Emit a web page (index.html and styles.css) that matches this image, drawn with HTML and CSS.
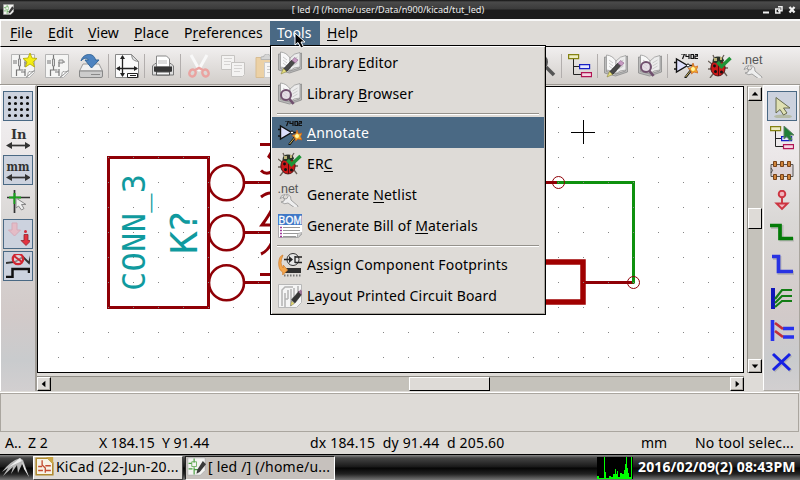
FILE: index.html
```html
<!DOCTYPE html>
<html lang="en">
<head>
<meta charset="utf-8">
<title>[ led /] (/home/user/Data/n900/kicad/tut_led)</title>
<link rel="stylesheet" href="styles.css">
</head>
<body>
<svg class="defs" width="0" height="0">
  <symbol id="sheet" viewBox="0 0 24 24">
    <path d="M.5.5h23v18l-5 5H.5z" fill="#f5f5f4" stroke="#b5b5b5"/>
    <path d="M2 7h4M2 9h4M8.500 1v4M8.500 12v4h-3v6M8.500 16h4M14 8v5M14 15v7M10 18h4M17 8h3" fill="none" stroke="#777" stroke-width="1.200"/>
    <path d="M7.500 5h2v7h-2zM14 6h4v3h-4z" fill="#ddd" stroke="#888"/>
    <path d="M15 23.500c3-2 1-4 3-6 2 1 4 0 5.500-1z" fill="#fff" stroke="#999"/>
  </symbol>
  <symbol id="save" viewBox="0 0 24 24">
    <path d="m4 10h16l3.500 7H.5z" fill="#f1f1f1" stroke="#999"/><path d="M.5 17h23v5q0 1.500-1.500 1.500H2Q.5 23.500.5 22z" fill="#ccc" stroke="#888"/><path d="M12 20.500h9" stroke="#888"/>
    <path d="M2 7C4-1 15-2 16.500 6H20l-7.500 8L6 6h3.500C8 3.500 5 3.500 2 7z" fill="#4d83c0" stroke="#336699"/>
  </symbol>
  <symbol id="page" viewBox="0 0 24 24">
    <path d="M.5.500h16l7 7v16H.5z" fill="#fbfbfb" stroke="#888"/><path d="M16.500.5c1 4 0 6 7 7z" fill="#ddd" stroke="#888"/>
    <path d="M7.500 2v20M2 14.500h20" stroke="#222" stroke-width="1.300"/><path d="m7.500 1 2.500 4h-5zM7.500 23l2.500-4h-5zM1 14.500l4-2.500v5zM23 14.500l-4-2.500v5z" fill="#222"/><path d="M12.500 19.500h10v4h-10zM15 21.500h6" fill="#fff" stroke="#222"/>
  </symbol>
  <symbol id="print" viewBox="0 0 24 24">
    <path d="M1.500 12 4 9.500h16l2.500 2.500v9h-21z" fill="#ddd" stroke="#777"/><path d="M5.500 2h10l3 3v8h-13z" fill="#fff" stroke="#888"/><path d="M7 7h9M7 9h9" stroke="#bbb"/><path d="M3 12.500h18v5q-9 2.500-18 0z" fill="#353535"/><path d="M5.500 18h13v3h-13z" fill="#f5f5f5" stroke="#555"/>
  </symbol>
  <symbol id="cut" viewBox="0 0 24 24"><path d="m4 1 9 16M20 1l-9 16" stroke="#f8f8f8" stroke-width="3"/><g fill="none" stroke="#eaa3a0" stroke-width="2.500"><ellipse cx="5.500" cy="19" rx="3" ry="3.500" transform="rotate(30 5.500 19)"/><ellipse cx="18.500" cy="19" rx="3" ry="3.500" transform="rotate(-30 18.500 19)"/><path d="M8 16l4-2 4 2"/></g></symbol>
  <symbol id="copy" viewBox="0 0 24 24"><g fill="#f4f3f2" stroke="#c6c4c2"><path d="M.5 1.500h13v14H.5z"/><path d="M10.500 8.500h13v12l-2 2h-11z"/></g><path d="M3 4.500h8M3 7.500h7M3 10.500h6M13 11.500h8M13 14.500h8M13 17.500h6" stroke="#d5d3d2"/></symbol>
  <symbol id="paste" viewBox="0 0 24 24"><path d="M1 3.500h21v20H1z" fill="#ecd1a5" stroke="#d8bd92"/><path d="M6 5.500V3l3-.5C9-1 15-1 15 2.500l3 .5v2.500z" fill="#d5d5d5" stroke="#b5b5b5"/><path d="M9.500 8.500h14v15h-14zM12 12.500h9M12 15.500h9M12 18.500h6" fill="#f7f6f5" stroke="#ccc"/></symbol>
  <symbol id="find" viewBox="0 0 24 24"><circle cx="8" cy="8" r="7" fill="#eee" stroke="#555" stroke-width="2"/><path d="m14 13 8 8" stroke="#555" stroke-width="3.500"/></symbol>
  <symbol id="tree" viewBox="0 0 24 24"><path d="M5.500 4v16.500H13M5.500 12.500H12" fill="none" stroke="#222"/><g stroke-width="1.200"><path d="M.6.600h10v4H.6z" fill="#ececc2" stroke="#848212"/><path d="M11.600 10.600h10v4h-10z" fill="#e4e7ff" stroke="#1720c4"/><path d="M13.500 18.600h10v4h-10z" fill="#f5d4e2" stroke="#b11654"/></g></symbol>
  <symbol id="book" viewBox="0 0 24 24"><path d="M.5 3v16l11 3 12-4V2l-2 1v14l-9.500 3L2.500 17.500V3z" fill="#bbb" stroke="#8c8c8c" stroke-width=".8"/><path d="M2.500 1q6 .5 9.500 6v13q-4-4-9.500-4z" fill="#f8f8f8" stroke="#9a9a9a" stroke-width=".8"/><path d="M12 7q4-5 10-5.500V16q-7 0-10 4z" fill="#ececec" stroke="#9a9a9a" stroke-width=".8"/><path d="m5 6 4 3M5 9l4 3M5 12l4 3M14.500 9l5-3M14.500 12l5-3M14.500 15l5-3" stroke="#cbcbcb"/></symbol>
  <symbol id="edlib" viewBox="0 0 24 24"><use href="#book"/><path d="m14 9 3 2.500-8.500 9-3-2.500z" fill="#4a4a4a" stroke="#222" stroke-width=".7"/><path d="m5.500 17.500 3 3-5.500 2.500z" fill="#e6df7e" stroke="#8c8640" stroke-width=".6"/><path d="m14 9.500 2.500-3 3.500 2.500-2.500 3z" fill="#c79bc2" stroke="#8d668b" stroke-width=".6"/></symbol>
  <symbol id="brlib" viewBox="0 0 24 24"><use href="#book"/><circle cx="8" cy="13" r="5" fill="#ddd3de" fill-opacity=".7" stroke="#70506e" stroke-width="2"/><path d="m11.500 17 4 5" stroke="#70506e" stroke-width="2.700"/></symbol>
  <symbol id="annot" viewBox="0 0 24 24"><path d="M7 0h3.500L8.500 5M12 0v2.500h3M15 0v5M17 .5h2.500v4H17zM21 .5h2.500v1.700H21v2.300h3" fill="none" stroke="#111" stroke-width="1.200"/><path d="M2.500 5v13L13.500 11.500z" fill="#dcdefb" stroke="#111" stroke-width="1.400"/><path d="M0 8.500h2M0 15h2M16 11.500h4" stroke="#111" stroke-width="1.300"/><circle cx="14" cy="11.500" r="1.500" fill="#fff" stroke="#111"/><path d="m18 15-7 9" stroke="#111" stroke-width="2.200"/><path d="m18 15-6.500 8" stroke="#e0c86a" stroke-width=".9"/><path d="m19 9 1.500 4 3.500-1-1.500 3.500L24 19l-4-1-2.500 2-.5-3.500-3-2 3.500-1z" fill="#f3a92b" stroke="#c95d20" stroke-width=".7"/><circle cx="19" cy="15" r="2" fill="#fff7a0"/></symbol>
  <symbol id="bug" viewBox="0 0 24 24"><path d="M7 6 5 1M13 6l3-5M4 10 0 7M3 15H0M5 20l-3 4M16 18l3 4M17 14h3" fill="none" stroke="#6a6058" stroke-width="1.300"/><ellipse cx="10" cy="14" rx="7.200" ry="8" fill="#cc1818" stroke="#3a0b0b" stroke-width=".8"/><path d="M4.500 8q0-5.500 5.500-5.500T16 7l-3 2H7z" fill="#2b3328"/><path d="M6 4h3v3H6zM12 3h2v3h-2z" fill="#bcb279"/><path d="M10.500 9v13" stroke="#550d0d"/><g fill="#111"><circle cx="6.500" cy="12" r="1.400"/><circle cx="7.500" cy="17.500" r="1.500"/><circle cx="13.500" cy="18" r="1.500"/></g><path d="m9.500 8 4 4.500L22.500 4" fill="none" stroke="#1f9437" stroke-width="3.500"/></symbol>
  <symbol id="net" viewBox="0 0 24 24"><text x="-.5" y="9.500" font-family="Liberation Sans" font-size="12.500" textLength="21" fill="#555">.net</text><path d="M7 11.500q-4 0-5 4l2.500-1 2 1.500-.5 2-3 1q4 3 7 1l7 5q3 1 3-2l-7-6q1-4-4-6l-1 .5 2 2-1 2-2 .5-2-2z" fill="#eee" stroke="#929292" stroke-width=".8"/></symbol>
  <symbol id="bom" viewBox="0 0 24 24"><path d="M.5.500h24v19l-4 4H.5z" fill="#fff" stroke="#aaa"/><path d="M0 0h25v11H0z" fill="#3f78c6"/><text x=".5" y="9.600" font-family="Liberation Sans" font-size="10.500" textLength="23.500" lengthAdjust="spacingAndGlyphs" fill="#fff" stroke="#fff" stroke-width=".3">BOM</text><path d="M5 13.500h17M5 16.500h17M5 19.500h15M5 22.500h13" stroke="#999"/><path d="M2 13.500h2M2 16.500h2M2 19.500h2M2 22.500h2" stroke="#a0389b" stroke-width="1.400"/><path d="m19 23.500 1-4 4.500-1z" fill="#eee" stroke="#aaa"/></symbol>
  <symbol id="cvpcb" viewBox="0 0 24 24"><circle cx="15" cy="6.500" r="6" fill="#e6e6e6" stroke="#333"/><path d="M6 6.500h5M17 3v7M17 4h7M17 9.500h7" stroke="#222" stroke-width="1.300"/><path d="m11 3 4 3.500L11 10z" fill="#222"/><path d="M5 15h18v5H5z" fill="#303030"/><path d="M6 22.500h18" stroke="#777" stroke-width="2" stroke-dasharray="1.500 1.500"/><path d="M5 2Q1 3 .7 10q-.2 7 4 9v3l5-5-4.500-5v3Q1 11 5 2z" fill="#f4a64c" stroke="#cf7b2b" stroke-width=".7"/></symbol>
  <symbol id="pcb" viewBox="0 0 24 24"><path d="M.5.500h23v18l-5 5H.5z" fill="#f5f5f5" stroke="#b8b8b8"/><path d="M4 22V6l3-3h8M7 23V9M10 15V6M10 15H7M13 5v17M16 4v9l-3 3M20 2v6" fill="none" stroke="#b3b3b3" stroke-width="1.500"/><path d="m21 7 3 3-7 9-3.500-3z" fill="#363636" stroke="#222" stroke-width=".5"/><path d="m20.500 8 2-2.500 3 3-2 2.500z" fill="#9a7395"/><path d="m13.500 17 3 2.500-4 2.500z" fill="#e8dc6e" stroke="#555" stroke-width=".4"/></symbol>
  <symbol id="grid" viewBox="0 0 24 24"><path d="M3.500 3.500h20M3.500 9.500h20M3.500 15.500h20M3.500 21.500h20" stroke="#111" stroke-width="3.200" stroke-linecap="round" stroke-dasharray="0 6"/></symbol>
  <symbol id="arrows" viewBox="0 0 24 24"><path d="M4 19.500h17" stroke="#333" stroke-width="1.700"/><path d="m0 19.500 6-3.500v7zM25 19.500l-6-3.500v7z" fill="#333"/></symbol>
  <symbol id="in" viewBox="0 0 24 24"><text x="5" y="13" class="unit">In</text><use href="#arrows"/></symbol>
  <symbol id="mm" viewBox="0 0 24 24"><text x=".5" y="13" class="unit" textLength="23" lengthAdjust="spacingAndGlyphs">mm</text><use href="#arrows"/></symbol>
  <symbol id="cross" viewBox="0 0 24 24"><path d="M8.500 0v23M1 7.500h23" stroke="#333" stroke-width="1.700"/><path d="M8.500 3v11M3 7.500h12" stroke="#19a21c" stroke-width="2"/><path d="M10 8v10l2.500-2 3 4 2.500-1.500-2.500-4H20z" fill="#eee" stroke="#888"/></symbol>
  <symbol id="hid" viewBox="0 0 24 24"><path d="M6 1h5v7h3.500l-6 6-6-6H6z" fill="#e4bcc6" stroke="#d5aab8"/><path d="M18 12.500h4v6h3l-5 5-5-5h3z" fill="#e2323f" stroke="#8e2731" stroke-width=".8"/><circle cx="19.500" cy="9.500" r="1.500" fill="#d42c3a"/></symbol>
  <symbol id="nodir" viewBox="0 0 24 24"><path d="m0 9 9-1 8-5 6 6 2-8" fill="none" stroke="#333" stroke-width="1.800"/><circle cx="12" cy="5" r="5.200" fill="#f1d5d5" fill-opacity=".5" stroke="#d12732" stroke-width="2.300"/><path d="m8 2 8 6" stroke="#d12732" stroke-width="2"/><path d="M0 23h6.500v-8H23v4" fill="none" stroke="#111" stroke-width="2.500"/></symbol>
  <symbol id="arrow" viewBox="0 0 24 24"><ellipse cx="13" cy="22.500" rx="9" ry="2" fill="#a5ac80" opacity=".6"/><path d="M6 3.500v15.500l4-3.500 3.500 5.500 3.500-2-3.500-5H20z" fill="#dfe0b2" stroke="#666a4e"/></symbol>
  <symbol id="treego" viewBox="0 0 24 24"><use href="#tree"/><path d="M14 0v13l3-2.500 2.500 4 2.500-1-2-4.500h4z" fill="#207f37" stroke="#5e8065"/></symbol>
  <symbol id="chip" viewBox="0 0 24 24"><path d="M1 6.500h22v12H1z" fill="#ded4d7" stroke="#555"/><path d="M1 10q3 2 0 5" fill="none" stroke="#444"/><g fill="#cf853c" stroke="#794319"><path d="M3.500 3.500h3v5h-3zM10.500 3.500h3v5h-3zM17.500 3.500h3v5h-3zM3.500 16.500h3v5h-3zM10.500 16.500h3v5h-3zM17.500 16.500h3v5h-3z"/></g></symbol>
  <symbol id="power" viewBox="0 0 24 24"><g fill="#f1b4bc" stroke="#cc3541" stroke-width="1.900"><path d="M12 7v7"/><circle cx="12" cy="4" r="3.300"/><path d="M6.500 13.500h11L12 19z"/></g></symbol>
  <symbol id="wire" viewBox="0 0 24 24"><path d="M1 5h10.500v12.500H24" fill="none" stroke="#999" stroke-width="4" opacity=".5"/><path d="M0 3.500h10v13h13" fill="none" stroke="#047b08" stroke-width="3.700"/></symbol>
  <symbol id="bus" viewBox="0 0 24 24"><path d="M3 4h6.500v15H24" fill="none" stroke="#999" stroke-width="4" opacity=".5"/><path d="M2 2.500h6.500v15H23" fill="none" stroke="#2933e2" stroke-width="3.700"/></symbol>
  <symbol id="entry" viewBox="0 0 24 24"><path d="M3 2v21" stroke="#1016b8" stroke-width="4"/><path d="M5 13l7-9h10M5 17l7-7h10M5 21l7-6h10" fill="none" stroke="#137d15" stroke-width="2.200"/></symbol>
  <symbol id="busent" viewBox="0 0 24 24"><path d="M2.500 2v21M13 10.500h11M13 19h11" stroke="#2731ed" stroke-width="3.600"/><path d="m5 5 8 6M5 13l8 6" stroke="#c12e3a" stroke-width="2.700"/></symbol>
  <symbol id="noconn" viewBox="0 0 24 24"><path d="m4 5 17 16M4 21 21 5" stroke="#999" stroke-width="3.200" opacity=".5"/><path d="m3 4 17 16M3 20 20 4" stroke="#1520e5" stroke-width="3"/></symbol>
  <symbol id="proj" viewBox="0 0 24 24"><path d="M1.500 1.500h15l6 6v15h-21z" fill="#f7f3e6" stroke="#b08b31" stroke-width="2"/><path d="M14 0h9v9z" fill="#c9a545"/><path d="M9 4v6l4 4v6M4 12h5M13 11h7M13 17h7M4 17h6" fill="none" stroke="#c44d32" stroke-width="1.700"/></symbol>
  <symbol id="eesch" viewBox="0 0 24 24"><path d="M1 1h22v16l-6 6H1z" fill="#f3f3f1" stroke="#aaa"/><path d="M2 8h4M9 2v5M9 13v9M9 16h6M2 15h5" stroke="#4ba042" stroke-width="1.500"/><path d="M6 6h6v6H6z" fill="none" stroke="#5aa64c"/><path d="m20 5 4 4-8 10-4 2 1-5z" fill="#3a3a3a"/></symbol>
</svg>

<div class="screen">
  <header class="title">
    <svg class="title-icon"><use href="#eesch"/></svg>
    <span>[ led /] (/home/user/Data/n900/kicad/tut_led)</span>
    <svg class="winbtns" viewBox="0 0 36 10"><path d="M1 7.500h6" stroke="#eee" stroke-width="2"/><path d="M16 1.800h4v4h-4M13.800 4h4v4h-4z" fill="none" stroke="#eee" stroke-width="1.500"/><path d="m27.500 2 5 5.500M27.500 7.500l5-5.500" stroke="#eee" stroke-width="2.300"/></svg>
  </header>

  <nav class="menubar">
    <span class="m-file"><u>F</u>ile</span><span class="m-edit"><u>E</u>dit</span><span class="m-view"><u>V</u>iew</span><span class="m-place"><u>P</u>lace</span><span class="m-pref">P<u>r</u>eferences</span>
    <div class="m-tools open"><u>T</u>ools
      <div class="menu">
        <div class="item"><svg><use href="#edlib"/></svg><span>Library <u>E</u>ditor</span></div>
        <div class="item"><svg><use href="#brlib"/></svg><span>Library <u>B</u>rowser</span></div>
        <hr>
        <div class="item active"><svg><use href="#annot"/></svg><span><u>A</u>nnotate</span></div>
        <div class="item"><svg><use href="#bug"/></svg><span>ER<u>C</u></span></div>
        <div class="item"><svg><use href="#net"/></svg><span>Generate <u>N</u>etlist</span></div>
        <div class="item"><svg><use href="#bom"/></svg><span>Generate Bill of <u>M</u>aterials</span></div>
        <hr>
        <div class="item"><svg><use href="#cvpcb"/></svg><span>A<u>s</u>sign Component Footprints</span></div>
        <div class="item"><svg><use href="#pcb"/></svg><span><u>L</u>ayout Printed Circuit Board</span></div>
      </div>
    </div>
    <span class="m-help"><u>H</u>elp</span>
  </nav>

  <div class="toolbar">
    <svg><use href="#sheet"/><polygon points="19,-1 21,4 26,4.500 22,8 23.500,13 19,10 14.500,13 16,8 12,4.500 17,4" fill="#f4ee12" stroke="#b3a800" stroke-width=".8"/></svg><svg><use href="#sheet"/></svg><svg><use href="#save"/></svg><i></i>
    <svg><use href="#page"/></svg><i></i><svg><use href="#print"/></svg><i></i>
    <svg><use href="#cut"/></svg><svg><use href="#copy"/></svg><svg><use href="#paste"/></svg>
    <b></b>
    <svg><use href="#find"/></svg><i></i><svg><use href="#tree"/></svg><i></i>
    <svg><use href="#edlib"/></svg><svg><use href="#brlib"/></svg><i></i>
    <svg><use href="#annot"/></svg><svg><use href="#bug"/></svg><svg><use href="#net"/></svg>
  </div>

  <main class="work">
    <div class="side left">
      <div class="tool on"><svg><use href="#grid"/></svg></div>
      <div class="tool"><svg><use href="#in"/></svg></div>
      <div class="tool on"><svg><use href="#mm"/></svg></div>
      <div class="tool"><svg><use href="#cross"/></svg></div>
      <div class="tool on"><svg><use href="#hid"/></svg></div>
      <div class="tool on"><svg><use href="#nodir"/></svg></div>
    </div>
    <div class="view">
      <svg class="sheet" viewBox="38 87 705 285">
        <defs><pattern id="dots" x="58" y="107" width="25" height="25" patternUnits="userSpaceOnUse"><rect width="1" height="1" fill="#858585"/></pattern></defs>
        <g fill="none" stroke="#8f0006" stroke-width="3">
          <path d="M108.500 157.500h100v150h-100z"/>
          <g stroke-width="2.600"><circle cx="226.500" cy="182.700" r="17.500"/><circle cx="226.500" cy="232.700" r="17.500"/><circle cx="226.500" cy="282.700" r="17.500"/></g>
          <path d="M244 182.500h50M244 232.500h50M244 282.500h50"/>
          <path d="M260 144.500h16l-7 12q10 8 3 15-6 4-11-1M261 197q8-6 13-3 5 8-12 31h14M261 254q7-3 11-12M260 274.500h16"/>
          <path d="M540 182.500h18M585 282.500h49"/>
          <path d="M500 262h83v40h-83" stroke-width="5.500" stroke="#a00000"/>
        </g>
        <path d="M557 182.500h76.500v101" fill="none" stroke="#0e910e" stroke-width="3"/>
        <g fill="none" stroke="#8f0006"><circle cx="558.500" cy="182.500" r="6"/><circle cx="633.500" cy="282.500" r="6"/></g>
        <g class="ref"><text transform="translate(145 291) rotate(-90)" font-size="32" textLength="117">CONN_3</text><text transform="translate(197 254) rotate(-90)" font-size="38" textLength="44">K?</text></g>
        <rect x="38" y="87" width="705" height="285" fill="url(#dots)"/>
        <path d="M571 132.500h24M583.500 120v24" stroke="#000"/>
      </svg>
      <div class="vbar"><button class="sb"><svg viewBox="0 0 13 13"><path d="m6.500 4 3.500 4H3z"/></svg></button><div class="vthumb"></div><button class="sb"><svg viewBox="0 0 13 13"><path d="m6.500 9 3.500-4H3z"/></svg></button></div>
      <div class="hbar"><button class="sb"><svg viewBox="0 0 13 13"><path d="m4 6.500 4-3.500v7z"/></svg></button><div class="hthumb"></div><button class="sb"><svg viewBox="0 0 13 13"><path d="m9 6.500-4-3.500v7z"/></svg></button></div>
    </div>
    <div class="side right">
      <div class="tool on"><svg><use href="#arrow"/></svg></div>
      <div class="tool"><svg><use href="#treego"/></svg></div>
      <div class="tool"><svg><use href="#chip"/></svg></div>
      <div class="tool"><svg><use href="#power"/></svg></div>
      <div class="tool"><svg><use href="#wire"/></svg></div>
      <div class="tool"><svg><use href="#bus"/></svg></div>
      <div class="tool"><svg><use href="#entry"/></svg></div>
      <div class="tool"><svg><use href="#busent"/></svg></div>
      <div class="tool"><svg><use href="#noconn"/></svg></div>
    </div>
  </main>

  <div class="messages"></div>
  <div class="status"><span>A..</span><span>Z 2</span><span>X 184.15&nbsp; Y 91.44</span><span class="delta">dx 184.15&nbsp; dy 91.44&nbsp; d 205.60</span><span>mm</span><span class="hint">No tool selec...</span></div>

  <footer class="taskbar">
    <svg class="logo" viewBox="0 0 33 25"><path d="M2 17Q10 6 20 3l3 2 6 17-7-13-4 9-1-8-6 9 2-7-10 9 5-8z" fill="#b8b8b8"/><path d="m20 3 2 3-13 6zM22 6l7 16-5-8z" fill="#eee"/></svg>
    <div class="task"><svg><use href="#proj"/></svg><span>KiCad (22-Jun-20...</span></div>
    <div class="task down"><svg><use href="#eesch"/></svg><span>[ led /] (/home/u...</span></div>
    <svg class="cpu" viewBox="0 0 36 22"><path d="M0 0h36v22H0z"/><path d="M0 22v-3h2v2h5V0h1v15h1v6h3v-2h2v1h2v-3h2v-5h1v5h1v-3h1v6h2v-4h2v1h2v-4h1v-6h1V0h1v11h1v5h1v4h2V0h1v22z" fill="#0f0"/></svg>
    <time>2016/02/09(2) 08:43PM</time>
  </footer>
</div>
<svg class="pointer" viewBox="0 0 12 18"><path d="M1 1v12l3-2.500L7 16l2.500-1-2.500-5h4z" stroke="#fff" stroke-width="1"/></svg>
</body>
</html>
```
FILE: styles.css
```css
* { box-sizing: border-box; }
body { margin: 0; font: 14px/18px "Noto Sans", "Open Sans", sans-serif; color: #000; }
svg { overflow: visible; display: block; flex: none; }
.defs { display: none; }
.screen { width: 800px; height: 480px; display: flex; flex-direction: column; background: #dedbd7; overflow: hidden; }
u { text-underline-offset: 2px; text-decoration-thickness: 1px; text-decoration-skip-ink: none; }

.title { height: 19px; display: flex; align-items: center; justify-content: space-between; padding: 0 2px 0 3px; color: #eee; font-size: 9.15px; line-height: 18px; background: linear-gradient(#111 0, #4a4a4a 2px, #3b3b3b 9px, #1c1c1c 10px, #1c1c1c); white-space: nowrap; }
.title-icon { width: 11px; height: 11px; margin-right: 0; }
.title span { margin-right: 0; }
.title-icon use { width: 11px; height: 11px; }
.winbtns { width: 36px; height: 10px; }

.menubar { height: 28px; display: flex; padding-left: 2px; border-top: 2px solid #f8f8f8; border-left: 1px solid #fff; border-bottom: 1px solid #000; line-height: 23px; white-space: nowrap; letter-spacing: .08px; }
.menubar > * { padding-left: 7px; }
.m-file { width: 38px; }
.m-edit { width: 40px; }
.m-view { width: 46px; }
.m-place { width: 50px; }
.m-pref { width: 93px; }
.m-tools { width: 50px; position: relative; }
.m-help { width: 60px; }
.open { background: #4a6984; color: #fff; }

.menu { position: absolute; z-index: 2; left: 0; top: 24px; width: 276px; height: 270px; padding: 1px; border: 1px solid #000; background: #dedbd7; box-shadow: inset 1px 1px #fff, inset -1px -1px #aaa69f; color: #000; letter-spacing: .18px; }
.item { height: 31px; display: flex; align-items: center; gap: 5px; padding: 0 6px; }
.item svg { width: 24px; height: 24px; }
.item.active { background: #4a6984; color: #fff; }
.menu hr { height: 2px; margin: 4px 5px 2px; border: 0; border-top: 1px solid #94918b; background: #fff; }

.toolbar { height: 37px; display: flex; align-items: center; padding: 0 29px 0 5px; border-left: 1px solid #fff; background: linear-gradient(#f1efef, #d2ceca); }
.toolbar svg { width: 24px; height: 24px; margin: 1px 5px 0; }
.toolbar i { width: 1px; height: 24px; margin-right: 1px; background: #b2aead; }
.toolbar b { flex: 1; }

.work { height: 307px; display: flex; border-top: 1px solid #9c9892; }
.side { width: 36px; padding: 5px 0 0 2px; border: 1px solid #fff; border-right: 1px solid #aaa69f; background: linear-gradient(#f3f2f3 0, #ebe7e8 23%, #d9d7d5 45%, #d2cac9 75%, #c9cbcd 90%, #d2cfd0); }
.side.left { width: 37px; border-right: 2px solid #a19d97; border-bottom: 0; }
.side.right { width: 37px; padding-left: 3px; border-bottom-color: #aaa69f; }
.tool { width: 30px; height: 30px; margin-bottom: 2px; padding: 3px; }
.tool svg { width: 24px; height: 24px; }
.tool.on { padding: 2px; border: 1px solid #4a6984; background: #ccd2de; }
.unit { font: bold 13px "DejaVu Serif", serif; fill: #333; }

.view { width: 726px; display: grid; grid-template: 287px 16px / 707px 15px; column-gap: 3px; row-gap: 3px; }
.sheet { width: 707px; height: 287px; border: 1px solid #000; background: #fff; overflow: hidden; margin-top: 1px; }
.ref text { font-family: "DejaVu Sans Mono", monospace; fill: #109a9e; }
.vbar, .hbar { display: flex; background: #c5c2bb; }
.vbar { height: 287px; flex-direction: column; justify-content: space-between; border-left: 1px solid #908d86; padding-top: 1px; margin-top: 1px; }
.hbar { border-top: 1px solid #908d86; justify-content: space-between; width: 707px; height: 15px; margin-top: 1px; }
.sb { width: 14px; height: 14px; padding: 0; border: 1px solid #fff; border-right-color: #000; border-bottom-color: #000; background: #dedbd7; box-shadow: inset -1px -1px #aaa69f; }
.sb svg { width: 12px; height: 12px; }
.vthumb, .hthumb { border: 1px solid #fff; border-right-color: #000; border-bottom-color: #000; background: #dedbd7; }
.vthumb { height: 21px; margin-top: -24px; }
.hthumb { width: 81px; margin-left: 118px; }

.messages { height: 39px; margin: 2px 1px 0 0; border: 1px solid #aaa69f; box-shadow: 0 -1px #fff; }
.status { height: 22px; display: grid; grid-template-columns: 23px 71px 211px 331px 54px 1fr; padding-left: 5px; line-height: 22px; white-space: nowrap; }
.delta, .hint { letter-spacing: .18px; }

.taskbar { height: 26px; display: flex; align-items: center; border-top: 1px solid #000; background: linear-gradient(#888 0, #444 3px, #181818 12px, #050505 13px, #222 19px, #777 25px); white-space: nowrap; }
.logo { width: 33px; height: 25px; }
.task { width: 150px; height: 24px; margin-right: 2px; padding: 0 0 2px 1px; display: flex; align-items: center; gap: 2px; border: 1px solid #fff; border-right-color: #444; border-bottom-color: #444; background: #dedbd7; letter-spacing: .2px; }
.task svg { width: 19px; height: 19px; }
.task.down { background: #c6c1bd; border-color: #222 #fff #fff #222; }
.cpu { width: 36px; height: 22px; margin-left: 260px; }
time { margin: -2px 0 0 5px; color: #fff; font-weight: bold; letter-spacing: .14px; }
.pointer { position: absolute; z-index: 4; left: 294px; top: 32px; width: 12px; height: 18px; }
```
